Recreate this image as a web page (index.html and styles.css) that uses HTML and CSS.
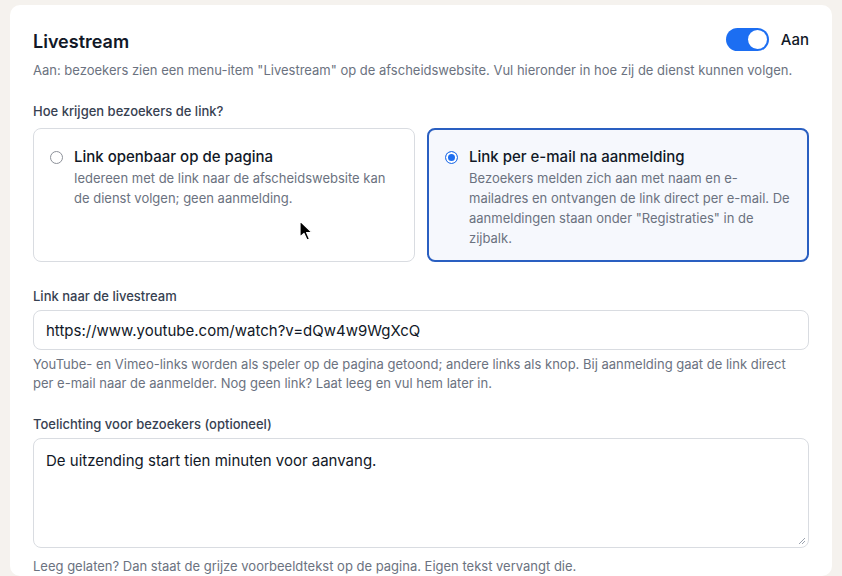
FILE: index.html
```html
<!DOCTYPE html>
<html lang="nl">
<head>
<meta charset="utf-8">
<title>Livestream</title>
<link rel="stylesheet" href="styles.css">
</head>
<body>
<div class="card">
  <div class="header">
    <h2 class="title">Livestream</h2>
    <div class="toggle-wrap">
      <span class="toggle"><span class="knob"></span></span>
      <span class="toggle-label">Aan</span>
    </div>
  </div>
  <p class="subtitle">Aan: bezoekers zien een menu-item "Livestream" op de afscheidswebsite. Vul hieronder in hoe zij de dienst kunnen volgen.</p>

  <div class="label label-first">Hoe krijgen bezoekers de link?</div>
  <div class="options">
    <div class="option">
      <span class="radio"></span>
      <div class="option-text">
        <div class="option-title">Link openbaar op de pagina</div>
        <div class="option-desc">Iedereen met de link naar de afscheidswebsite kan de dienst volgen; geen aanmelding.</div>
      </div>
    </div>
    <div class="option selected">
      <span class="radio checked"></span>
      <div class="option-text">
        <div class="option-title">Link per e-mail na aanmelding</div>
        <div class="option-desc">Bezoekers melden zich aan met naam en e-mailadres en ontvangen de link direct per e-mail. De aanmeldingen staan onder "Registraties" in de zijbalk.</div>
      </div>
    </div>
  </div>

  <div class="label">Link naar de livestream</div>
  <div class="input">https://www.youtube.com/watch?v=dQw4w9WgXcQ</div>
  <p class="help">YouTube- en Vimeo-links worden als speler op de pagina getoond; andere links als knop. Bij aanmelding gaat de link direct per e-mail naar de aanmelder. Nog geen link? Laat leeg en vul hem later in.</p>

  <div class="label label-tight">Toelichting voor bezoekers (optioneel)</div>
  <div class="textarea">De uitzending start tien minuten voor aanvang.
    <svg class="grip" width="8" height="8" viewBox="0 0 8 8"><path d="M7 1L1 7M7 4L4 7" stroke="#9ca3af" stroke-width="1"/></svg>
  </div>
  <p class="help help-last">Leeg gelaten? Dan staat de grijze voorbeeldtekst op de pagina. Eigen tekst vervangt die.</p>
</div>
<svg class="cursor" width="16" height="22" viewBox="0 0 16 22"><path d="M1 1 L1 17 L5 13.5 L8 20 L10.5 19 L7.6 12.6 L13 12.6 Z" fill="#000" stroke="#fff" stroke-width="1.2" stroke-linejoin="round"/></svg>
</body>
</html>
```

FILE: styles.css
```css
* { box-sizing: border-box; }
html, body { margin: 0; padding: 0; }
body {
  background: #f5f2ee;
  font-family: Inter, "Noto Sans", "Liberation Sans", sans-serif;
  color: #111827;
  height: 576px;
  overflow: hidden;
  position: relative;
}
.card {
  margin: 5px 10px 0 10px;
  background: #fff;
  border-radius: 10px;
  padding: 24px 23px 0 23px;
  height: 571px;
  overflow: hidden;
}
.header {
  display: flex;
  align-items: center;
  justify-content: space-between;
  height: 26px;
}
.title {
  margin: 0;
  font-size: 18px;
  font-weight: 600;
  line-height: 26px;
  color: #111827;
}
.toggle-wrap {
  display: flex;
  align-items: center;
  gap: 12px;
  margin-top: -6px;
}
.toggle {
  width: 43px;
  height: 23px;
  border-radius: 12px;
  background: #1c6ef2;
  display: flex;
  align-items: center;
  justify-content: flex-end;
  padding: 2px;
}
.knob {
  width: 19px;
  height: 19px;
  border-radius: 50%;
  background: #fff;
}
.toggle-label {
  font-size: 15px;
  font-weight: 500;
  color: #111827;
}
.subtitle {
  margin: 5px 0 0 0;
  font-size: 13px;
  line-height: 20px;
  color: #6b7280;
}
.label {
  margin-top: 24px;
  font-size: 13px;
  font-weight: 500;
  line-height: 20px;
  color: #374151;
}
.label-first { margin-top: 21px; }
.label-tight { margin-top: 21px; }
.options {
  display: grid;
  grid-template-columns: 1fr 1fr;
  gap: 12px;
  margin-top: 7px;
}
.option {
  display: flex;
  align-items: flex-start;
  border: 1px solid #d9dce1;
  border-radius: 8px;
  padding: 17px 20px 13px 16px;
  background: #fff;
}
.option.selected {
  border: 2px solid #2a5fc1;
  background: #f6f8fd;
  padding: 16px 16px 12px 16px;
}
.radio {
  flex: none;
  width: 13px;
  height: 13px;
  border-radius: 50%;
  border: 1px solid #8d9199;
  margin-top: 5px;
  margin-right: 11px;
  background: #fff;
}
.radio.checked {
  border: 1.5px solid #2f76e8;
  background: #1e6ef0;
  box-shadow: inset 0 0 0 2px #fff;
}
.option-title {
  font-size: 15px;
  font-weight: 500;
  line-height: 22px;
  color: #111827;
}
.option-desc {
  font-size: 13px;
  line-height: 20px;
  color: #6b7280;
}
.input {
  margin-top: 4px;
  height: 40px;
  border: 1px solid #d9dce1;
  border-radius: 8px;
  padding: 0 12px;
  display: flex;
  align-items: center;
  font-size: 15px;
  color: #111827;
}
.help {
  margin: 5px 0 0 0;
  font-size: 13px;
  line-height: 19px;
  color: #6b7280;
}
.textarea {
  position: relative;
  margin-top: 4px;
  height: 110px;
  border: 1px solid #d9dce1;
  border-radius: 8px;
  padding: 11px 12px;
  font-size: 15px;
  line-height: 22px;
  color: #111827;
}
.grip {
  position: absolute;
  right: 2px;
  bottom: 2px;
}
.help-last { margin-top: 9px; }
.cursor {
  position: absolute;
  left: 299px;
  top: 220px;
}
```
